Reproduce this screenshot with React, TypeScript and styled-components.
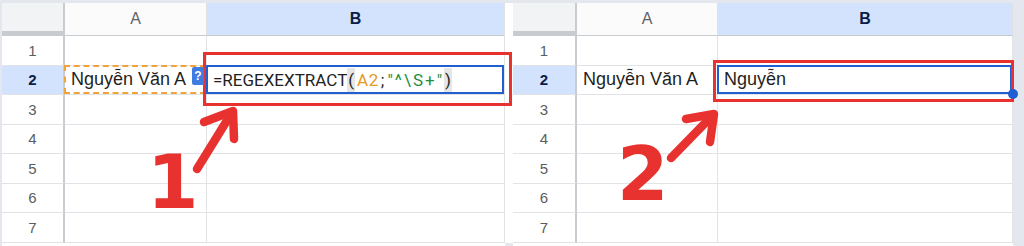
import React from "react";
import styled, { createGlobalStyle, css } from "styled-components";

const GlobalStyle = createGlobalStyle`
  html, body { margin: 0; padding: 0; }
  body {
    background: #e4e8ee;
    font-family: "Liberation Sans", Arial, sans-serif;
  }
`;

const RED = "#e8322f";
const BLUE = "#1f5fd1";

const Frame = styled.div`
  position: relative;
  width: 1024px;
  height: 246px;
  box-sizing: border-box;
  padding: 3px 11px 0 2px;
  display: flex;
  background: #e4e8ee;
  overflow: hidden;
`;

const Divider = styled.div`
  width: 8px;
  height: 239.5px;
  background: #fff;
`;

const Grid = styled.div<{ $cols: string }>`
  display: grid;
  grid-template-columns: ${p => p.$cols};
  grid-template-rows: 33px repeat(7, 29.5px);
  background: #fff;
`;

const Corner = styled.div`
  background: #f1f3f4;
  border-right: 2px solid #c8cbcf;
  border-bottom: 5px solid #c8cbcf;
  box-sizing: border-box;
  height: 33px;
`;

const ColHead = styled.div<{ $active?: boolean }>`
  display: flex;
  align-items: center;
  justify-content: center;
  box-sizing: border-box;
  border-right: 1px solid #dfe1e4;
  border-bottom: 1px solid #c8cbcf;
  font-size: 16px;
  color: #5f6368;
  background: #fbfbfc;
  ${p => p.$active && css`
    background: #d3e3fd;
    color: #0b1d45;
    font-weight: 700;
  `}
`;

const RowHead = styled.div<{ $active?: boolean }>`
  display: flex;
  align-items: center;
  justify-content: center;
  box-sizing: border-box;
  border-right: 2px solid #c8cbcf;
  border-bottom: 1px solid #e2e3e5;
  font-size: 15px;
  color: #5a5e63;
  background: #fff;
  ${p => p.$active && css`
    background: #d3e3fd;
    color: #0b1d45;
    font-weight: 700;
  `}
`;

type Mark = "copy" | "edit" | "select";

const Cell = styled.div<{ $mark?: Mark }>`
  position: relative;
  display: flex;
  align-items: center;
  box-sizing: border-box;
  padding-left: 6px;
  border-right: 1px solid #e2e3e5;
  border-bottom: 1px solid #e2e3e5;
  font-size: 18px;
  color: #1f1f1f;
  white-space: nowrap;
  ${p => p.$mark && css`
    &::after {
      content: "";
      position: absolute;
      inset: -1px 0 0 -1px;
      border: 2px ${p.$mark === "copy" ? "dashed #f0a33a" : `solid ${BLUE}`};
      pointer-events: none;
    }
  `}
`;

const Badge = styled.span`
  position: absolute;
  right: 2px;
  top: 1px;
  width: 12px;
  height: 18px;
  border-radius: 2px 0 0 2px;
  background: #3f7be0;
  color: #fff;
  font-size: 12px;
  font-weight: 700;
  display: flex;
  align-items: center;
  justify-content: center;
  z-index: 1;
`;

const Handle = styled.span`
  position: absolute;
  right: -6px;
  bottom: -5px;
  width: 10px;
  height: 10px;
  border-radius: 50%;
  background: ${BLUE};
  z-index: 1;
`;

const Formula = styled.span`
  font-family: Roboto, "Liberation Sans", sans-serif;
  font-size: 17px;
  color: #1f1f1f;
  display: flex;
  align-items: center;
  height: 100%;
`;

const Paren = styled.span`
  background: #e6e6e6;
  padding: 2px 1px;
`;

const Ref = styled.span`
  color: #e69a23;
  padding: 0 2px;
  letter-spacing: 0.5px;
`;

const Str = styled.span`
  color: #1e8e3e;
  letter-spacing: 2px;
  padding-left: 3px;
`;

const Callout = styled.div`
  position: absolute;
  box-sizing: border-box;
  border: 3px solid ${RED};
  pointer-events: none;
`;

const StepNumber = styled.span`
  position: absolute;
  font-family: "DejaVu Sans", sans-serif;
  font-weight: 700;
  font-size: 74px;
  line-height: 1;
  color: ${RED};
`;

const Arrows = styled.svg`
  position: absolute;
  left: 0;
  top: 0;
  pointer-events: none;
`;

const COLS = ["A", "B"];
const ROWS = [1, 2, 3, 4, 5, 6, 7];

type SheetProps = {
  cols: string;
  cells: Record<string, { content: React.ReactNode; mark?: Mark; extra?: React.ReactNode }>;
};

function Sheet({ cols, cells }: SheetProps) {
  return (
    <Grid $cols={cols}>
      <Corner />
      {COLS.map(c => (
        <ColHead key={c} $active={c === "B"}>{c}</ColHead>
      ))}
      {ROWS.map(r => (
        <React.Fragment key={r}>
          <RowHead $active={r === 2}>{r}</RowHead>
          {COLS.map(c => {
            const cell = cells[c + r];
            return (
              <Cell key={c + r} $mark={cell?.mark}>
                {cell?.content}
                {cell?.extra}
              </Cell>
            );
          })}
        </React.Fragment>
      ))}
    </Grid>
  );
}

export default function App() {
  return (
    <>
      <GlobalStyle />
      <Frame>
        <Sheet
          cols="63px 142px 298px"
          cells={{
            A2: { content: "Nguyễn Văn A", mark: "copy", extra: <Badge>?</Badge> },
            B2: {
              mark: "edit",
              content: (
                <Formula>
                  =REGEXEXTRACT<Paren>(</Paren>
                  <Ref>A2</Ref>;<Str>"^\S+"</Str>
                  <Paren>)</Paren>
                </Formula>
              ),
            },
          }}
        />
        <Divider />
        <Sheet
          cols="64px 141px 295px"
          cells={{
            A2: { content: "Nguyễn Văn A" },
            B2: { content: "Nguyễn", mark: "select", extra: <Handle /> },
          }}
        />

        <Callout style={{ left: 203, top: 52, width: 309, height: 54 }} />
        <Callout style={{ left: 713, top: 60, width: 301, height: 42 }} />

        <StepNumber style={{ left: 147, top: 145 }}>1</StepNumber>
        <StepNumber style={{ left: 617, top: 137 }}>2</StepNumber>

        <Arrows width="1024" height="246" viewBox="0 0 1024 246">
          <g fill="none" stroke={RED} strokeWidth="8.5" strokeLinecap="round" strokeLinejoin="round">
            <path d="M197 169 L231 114" />
            <path d="M204 122 L233 111 L234 139" />
            <path d="M671 158 L711 117" />
            <path d="M686 119 L714 114 L710 142" />
          </g>
        </Arrows>
      </Frame>
    </>
  );
}
